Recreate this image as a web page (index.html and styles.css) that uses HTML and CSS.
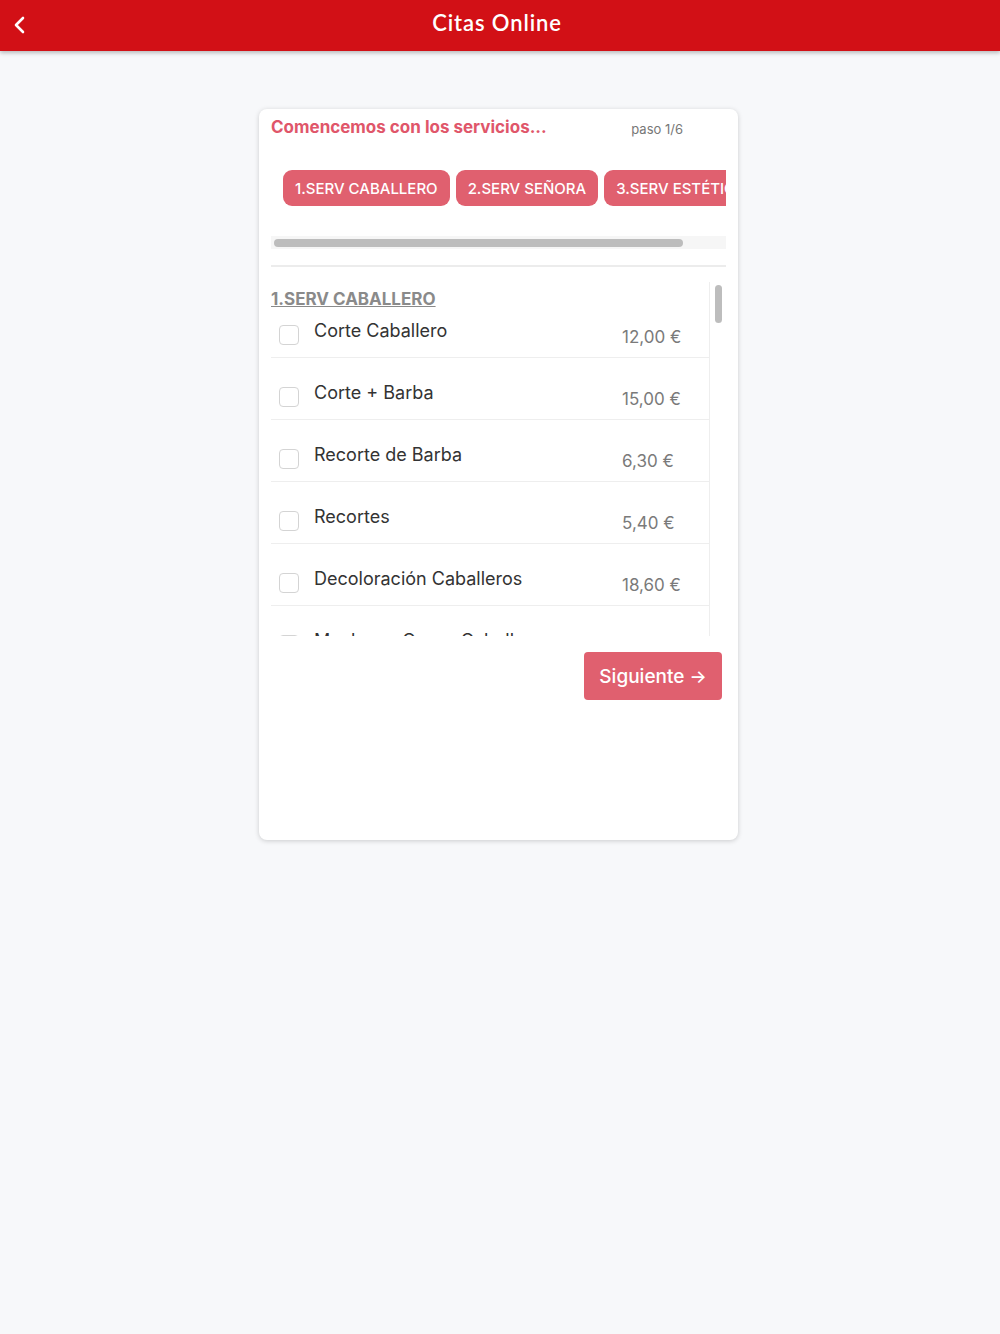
FILE: index.html
```html
<!DOCTYPE html>
<html lang="es">
<head>
    <meta charset="UTF-8">
    <meta name="viewport" content="width=device-width, initial-scale=1.0">
    <title>Citas Online</title>
    <link rel="stylesheet" href="styles.css">
</head>
<body>
    <header class="topbar">
        <button class="back-btn" aria-label="Volver">
            <svg width="14" height="20" viewBox="0 0 14 20"><path d="M10 3 L3 10 L10 17" fill="none" stroke="#fff" stroke-width="2.6" stroke-linecap="round" stroke-linejoin="round"/></svg>
        </button>
        <h1 class="topbar-title">Citas Online</h1>
    </header>

    <main class="page">
        <section class="card">
            <div class="card-head">
                <h2 class="card-title">Comencemos con los servicios...</h2>
                <span class="step">paso 1/6</span>
            </div>

            <div class="tabs-wrap">
                <div class="tabs">
                    <button class="tab">1.SERV CABALLERO</button>
                    <button class="tab">2.SERV SEÑORA</button>
                    <button class="tab">3.SERV ESTÉTICA</button>
                </div>
            </div>
            <div class="hscroll"><div class="hscroll-thumb"></div></div>
            <hr class="divider">

            <div class="list-box">
                <div class="list">
                    <h3 class="group-title">1.SERV CABALLERO</h3>
                    <label class="item">
                        <span class="check"></span>
                        <span class="item-name">Corte Caballero</span>
                        <span class="item-price">12,00 €</span>
                    </label>
                    <label class="item">
                        <span class="check"></span>
                        <span class="item-name">Corte + Barba</span>
                        <span class="item-price">15,00 €</span>
                    </label>
                    <label class="item">
                        <span class="check"></span>
                        <span class="item-name">Recorte de Barba</span>
                        <span class="item-price">6,30 €</span>
                    </label>
                    <label class="item">
                        <span class="check"></span>
                        <span class="item-name">Recortes</span>
                        <span class="item-price">5,40 €</span>
                    </label>
                    <label class="item">
                        <span class="check"></span>
                        <span class="item-name">Decoloración Caballeros</span>
                        <span class="item-price">18,60 €</span>
                    </label>
                    <label class="item">
                        <span class="check"></span>
                        <span class="item-name">Mechas o Canas Caballeros</span>
                        <span class="item-price">24,00 €</span>
                    </label>
                </div>
                <div class="vscroll"><div class="vscroll-thumb"></div></div>
            </div>

            <div class="actions">
                <button class="next-btn">Siguiente <span class="arrow">&rarr;</span></button>
            </div>
        </section>
    </main>
</body>
</html>
```

FILE: styles.css
```css
body {
    margin: 0;
    padding: 0;
    background-color: #f7f8fa;
    font-family: Inter, "Liberation Sans", sans-serif;
    min-height: 1334px;
}

.topbar {
    height: 51px;
    background-color: #d21016;
    box-shadow: 0 2px 4px rgba(0, 0, 0, 0.25);
    display: flex;
    align-items: center;
    justify-content: center;
    position: relative;
}

.back-btn {
    position: absolute;
    left: 10px;
    top: 13px;
    background: none;
    border: none;
    padding: 0;
    width: 20px;
    height: 24px;
    display: flex;
    align-items: center;
    justify-content: center;
}

.topbar-title {
    margin: 0 0 6px;
    color: #fff;
    font-family: Lato, sans-serif;
    font-weight: 600;
    font-size: 22px;
    letter-spacing: 0.9px;
    padding-right: 6px;
}

.page {
    display: flex;
    justify-content: center;
    padding-top: 58px;
}

.card {
    width: 479px;
    height: 731px;
    box-sizing: border-box;
    background: #fff;
    border-radius: 8px;
    box-shadow: 0 1px 5px rgba(0, 0, 0, 0.18);
    padding: 0 12px;
    margin-left: -3px;
}

.card-head {
    display: flex;
    justify-content: space-between;
    align-items: center;
    height: 34px;
    padding-top: 1px;
    padding-right: 43px;
}

.card-title {
    margin: 0;
    color: #e0566a;
    font-size: 17px;
    font-weight: 700;
}

.step {
    color: #777;
    font-size: 13px;
    padding-top: 4px;
}

.tabs-wrap {
    overflow: hidden;
    padding: 26px 0 0 12px;
}

.tabs {
    display: flex;
    gap: 5px;
    width: max-content;
}

.tab {
    height: 36px;
    padding: 0 12px;
    background-color: #e0606f;
    color: #fff;
    border: none;
    border-radius: 9px;
    font-family: Inter, "Liberation Sans", sans-serif;
    font-size: 15px;
    font-weight: 500;
}

.tab + .tab {
    margin-left: 1px;
}

.hscroll {
    margin-top: 30px;
    height: 13px;
    background: #f6f6f6;
    display: flex;
    align-items: center;
    padding-left: 3px;
}

.hscroll-thumb {
    width: 409px;
    height: 8px;
    border-radius: 4px;
    background: #bdbdbd;
}

.divider {
    margin: 16px 0 0;
    border: none;
    border-top: 2px solid #ececec;
}

.list-box {
    display: flex;
    height: 354px;
    margin-top: 15px;
}

.list {
    flex: 1;
    overflow: hidden;
}

.group-title {
    margin: 7px 0 0;
    font-size: 17px;
    font-weight: 700;
    color: #8a8a8a;
    text-decoration: underline;
    line-height: 20px;
}

.item {
    display: flex;
    align-items: flex-end;
    box-sizing: border-box;
    height: 62px;
    border-bottom: 1px solid #eeeeee;
}

.item:first-of-type {
    height: 49px;
}

.check {
    width: 18px;
    height: 18px;
    border: 1px solid #d4d4d4;
    border-radius: 4px;
    margin: 0 0 12px 8px;
    flex-shrink: 0;
}

.item-name {
    margin: 0 0 15px 15px;
    font-size: 18px;
    line-height: 22px;
    color: #333;
    width: 308px;
}

.item-price {
    font-size: 17px;
    line-height: 20px;
    color: #7a7a7a;
    margin-bottom: 10px;
}

.vscroll {
    width: 16px;
    border-left: 1px solid #eeeeee;
    display: flex;
    justify-content: center;
    padding-top: 3px;
}

.vscroll-thumb {
    width: 7px;
    height: 38px;
    border-radius: 4px;
    background: #bdbdbd;
}

.actions {
    display: flex;
    justify-content: flex-end;
    padding: 16px 4px 0 0;
}

.next-btn {
    width: 138px;
    height: 48px;
    background-color: #e0606f;
    color: #fff;
    border: none;
    border-radius: 4px;
    font-family: Inter, "Liberation Sans", sans-serif;
    font-size: 19px;
    font-weight: 500;
}

.arrow {
    font-size: 18px;
}
```
